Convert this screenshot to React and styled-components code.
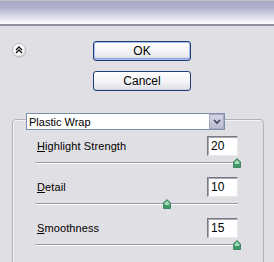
import React from "react";
import styled, { createGlobalStyle } from "styled-components";

const Global = createGlobalStyle`
  html, body { margin: 0; padding: 0; }
  body {
    background: #e0dfe3;
    font-family: "Liberation Sans", Arial, sans-serif;
    font-size: 11px;
    color: #000;
    overflow: hidden;
  }
`;

const Page = styled.div`
  width: 274px;
  height: 262px;
  background: #e0dfe3;
  overflow: hidden;
`;

const TitleBar = styled.div`
  height: 23px;
  border-top: 1px solid #c2c2cc;
  border-bottom: 2px solid #8f8f9f;
  background: linear-gradient(#a7a7c7 0%, #b3b3cf 30%, #dcdcea 70%, #ffffff 100%);
`;

const TopSection = styled.div`
  display: flex;
  align-items: flex-start;
  padding: 15px 0 0 12px;
`;

const CollapseButton = styled.div`
  width: 12px;
  height: 12px;
  margin-top: 2px;
  border-radius: 50%;
  border: 1px solid #b8b8c0;
  background: radial-gradient(circle at 40% 35%, #ffffff 40%, #e4e4ea 100%);
  display: flex;
  align-items: center;
  justify-content: center;
  box-shadow: 0 1px 1px rgba(0,0,0,0.08);
`;

const ButtonColumn = styled.div`
  display: flex;
  flex-direction: column;
  gap: 10px;
  margin-left: 67px;
`;

const Button = styled.div`
  box-sizing: border-box;
  width: 98px;
  height: 20px;
  border: 1px solid #1c3f78;
  border-radius: 3px;
  background: linear-gradient(#ffffff 0%, #f2f2f6 60%, #dcdce4 100%);
  display: flex;
  align-items: center;
  justify-content: center;
  font-size: 12px;
  box-shadow: ${(p) =>
    p.$default ? "inset 0 0 0 1px #a9bde6, inset 0 -1px 0 1px #8aa4d8" : "inset 0 -1px 0 #d0d0dc"};
`;

const GroupBox = styled.div`
  margin: 28px 0 0 12px;
  width: 250px;
  height: 200px;
  border: 1px solid #b2b2ba;
  border-radius: 4px;
  box-shadow: inset 1px 1px 0 #f4f4f6;
`;

const Dropdown = styled.div`
  box-sizing: border-box;
  display: flex;
  align-items: center;
  justify-content: space-between;
  width: 199px;
  height: 17px;
  margin: -7px 0 0 13px;
  background: #fff;
  border: 1px solid #7f8fa9;
  padding-left: 2px;
  font-size: 11px;
`;

const DropArrow = styled.div`
  box-sizing: border-box;
  width: 15px;
  height: 15px;
  background: linear-gradient(#d4d4e6, #bcbcd2);
  border: 1px solid #a8a8c0;
  display: flex;
  align-items: center;
  justify-content: center;
`;

const Controls = styled.div`
  display: flex;
  flex-direction: column;
  gap: 8px;
  padding: 6px 24px 0 22px;
`;

const Control = styled.div`
  display: flex;
  flex-direction: column;
`;

const HeaderRow = styled.div`
  display: flex;
  align-items: center;
  justify-content: space-between;
  height: 20px;
`;

const Label = styled.span`
  padding-left: 2px;
  font-size: 11px;
  letter-spacing: 0.1px;
  u { text-decoration: underline; }
`;

const ValueBox = styled.div`
  box-sizing: border-box;
  width: 31px;
  height: 20px;
  margin-right: 1px;
  background: #fff;
  border: 1px solid #7a7a82;
  border-right-color: #e8e8ec;
  border-bottom-color: #e8e8ec;
  box-shadow: inset 1px 1px 0 #a8a8b0;
  padding: 2px 0 0 3px;
  font-size: 12px;
`;

const SliderArea = styled.div`
  position: relative;
  height: 13px;
  width: 203px;
`;

const Track = styled.div`
  margin-top: 6px;
  height: 1px;
  background: #9a9aa4;
  border-bottom: 1px solid #ffffff;
  border-left: 1px solid #c0c0c8;
`;

const Thumb = styled.svg`
  position: absolute;
  top: 2px;
  width: 8px;
  height: 10px;
  margin-left: -4px;
`;

function Slider({ pos }) {
  return (
    <SliderArea>
      <Track />
      <Thumb viewBox="0 0 8 10" style={{ left: `${pos}px` }}>
        <path d="M4 0.5 L7.5 4 L7.5 9.5 L0.5 9.5 L0.5 4 Z" fill="#3f9a6a" stroke="#2e7a50" strokeWidth="0.8" />
        <path d="M4 1.8 L6.2 4.2 L6.2 6 L1.8 6 L1.8 4.2 Z" fill="#a6dcbc" />
      </Thumb>
    </SliderArea>
  );
}

const controls = [
  { first: "H", rest: "ighlight Strength", value: "20", pos: 202 },
  { first: "D", rest: "etail", value: "10", pos: 132 },
  { first: "S", rest: "moothness", value: "15", pos: 202 },
];

export default function App() {
  return (
    <Page>
      <Global />
      <TitleBar />
      <TopSection>
        <CollapseButton>
          <svg width="8" height="8" viewBox="0 0 8 8">
            <path d="M1 4 L4 1 L7 4 M1 7 L4 4 L7 7" fill="none" stroke="#111" strokeWidth="1.3" />
          </svg>
        </CollapseButton>
        <ButtonColumn>
          <Button $default>OK</Button>
          <Button>Cancel</Button>
        </ButtonColumn>
      </TopSection>
      <GroupBox>
        <Dropdown>
          <span>Plastic Wrap</span>
          <DropArrow>
            <svg width="8" height="6" viewBox="0 0 8 6">
              <path d="M1 1 L4 4 L7 1" fill="none" stroke="#404058" strokeWidth="1.6" />
            </svg>
          </DropArrow>
        </Dropdown>
        <Controls>
          {controls.map((c) => (
            <Control key={c.rest}>
              <HeaderRow>
                <Label>
                  <u>{c.first}</u>
                  {c.rest}
                </Label>
                <ValueBox>{c.value}</ValueBox>
              </HeaderRow>
              <Slider pos={c.pos} />
            </Control>
          ))}
        </Controls>
      </GroupBox>
    </Page>
  );
}
